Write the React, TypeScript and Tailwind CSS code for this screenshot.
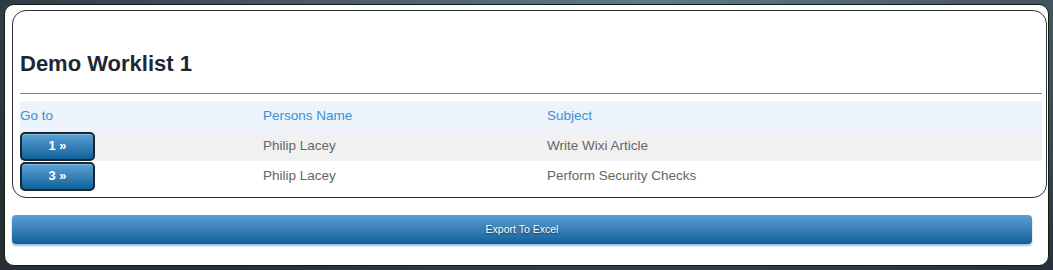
import React from 'react';

const rows = [
  { id: 1, name: 'Philip Lacey', subject: 'Write Wixi Article' },
  { id: 3, name: 'Philip Lacey', subject: 'Perform Security Checks' },
];

export default function App() {
  return (
    <div className="w-[1053px] h-[270px] p-[4px] bg-[radial-gradient(ellipse_at_62%_0%,#62768e_0%,#43525f_45%,#262e36_85%)] font-['Liberation_Sans',Arial,sans-serif]">
      <div className="h-[262px] rounded-[10px] border border-[#0d200d] bg-white pl-[7px] pr-[1px] pt-[5px]">
        <div className="rounded-[14px] border border-[#2a2f35] pl-[7px] pr-[4px] pt-[40px] pb-[6px]">
          <h2 className="text-[22px] leading-[26px] font-bold text-[#1e2833]">Demo Worklist 1</h2>
          <hr className="mt-[16px] border-t border-[#858585]" />
          <table className="mt-[7px] w-full border-collapse text-[13.5px]">
            <thead>
              <tr className="h-[30px] bg-[#ecf3fa] text-left text-[#3b8fd3]">
                <th className="w-[243px] p-0 font-normal">Go to</th>
                <th className="w-[284px] p-0 font-normal">Persons Name</th>
                <th className="p-0 font-normal">Subject</th>
              </tr>
            </thead>
            <tbody className="text-[#666]">
              {rows.map((r, i) => (
                <tr key={r.id} className={i % 2 === 0 ? 'h-[30px] bg-[#f1f1f1]' : 'h-[30px] bg-white'}>
                  <td className="p-0 align-middle">
                    <button className="flex h-[29px] w-[75px] items-center justify-center rounded-[5px] border-2 border-[#1b2733] bg-gradient-to-b from-[#5aa3d8] to-[#0b6199] text-[13px] font-bold text-white shadow-[inset_0_1px_0_rgba(255,255,255,0.3)]">
                      {r.id} »
                    </button>
                  </td>
                  <td className="p-0">{r.name}</td>
                  <td className="p-0">{r.subject}</td>
                </tr>
              ))}
            </tbody>
          </table>
        </div>
        <button className="mt-[17px] flex h-[29px] w-[1020px] items-center justify-center rounded-[4px] bg-gradient-to-b from-[#5ba0d5] to-[#0a6099] text-[10.5px] text-white [text-shadow:0_1px_2px_rgba(0,0,0,0.6)] shadow-[0_2px_2px_rgba(90,150,210,0.6)]">
          Export To Excel
        </button>
      </div>
    </div>
  );
}
